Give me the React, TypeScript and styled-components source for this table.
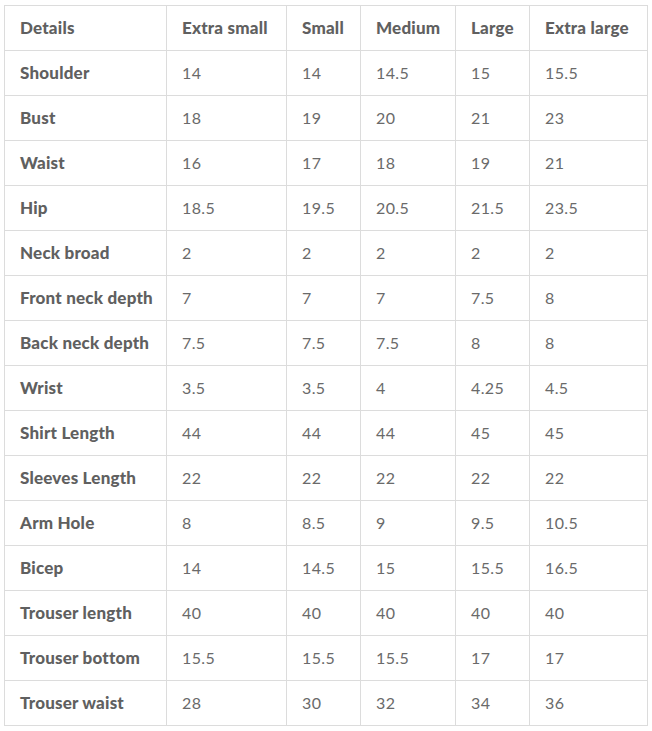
import React from "react";
import styled, { createGlobalStyle } from "styled-components";

const Global = createGlobalStyle`
  html, body { margin: 0; padding: 0; background: #fff; }
  body { font-family: "Lato", "Open Sans", sans-serif; }
`;

const Wrap = styled.div`
  padding: 5px 0 0 4px;
`;

const Table = styled.table`
  border-collapse: collapse;
  table-layout: fixed;
  width: 643px;
  color: #666;
`;

const Cell = styled.td<{ $bold?: boolean }>`
  border: 1px solid #dcdcdc;
  height: 43px;
  padding: 0 0 1px 15px;
  font-size: ${(p) => (p.$bold ? "17px" : "16px")};
  font-weight: ${(p) => (p.$bold ? 900 : 400)};
  color: ${(p) => (p.$bold ? "#606060" : "#6a6a6a")};
  letter-spacing: ${(p) => (p.$bold ? "0.2px" : "0.4px")};
  white-space: nowrap;
  text-align: left;
  vertical-align: middle;
`;

const widths = [162, 120, 74, 95, 74, 118];
const header = ["Details", "Extra small", "Small", "Medium", "Large", "Extra large"];
const rows: string[][] = [
  ["Shoulder", "14", "14", "14.5", "15", "15.5"],
  ["Bust", "18", "19", "20", "21", "23"],
  ["Waist", "16", "17", "18", "19", "21"],
  ["Hip", "18.5", "19.5", "20.5", "21.5", "23.5"],
  ["Neck broad", "2", "2", "2", "2", "2"],
  ["Front neck depth", "7", "7", "7", "7.5", "8"],
  ["Back neck depth", "7.5", "7.5", "7.5", "8", "8"],
  ["Wrist", "3.5", "3.5", "4", "4.25", "4.5"],
  ["Shirt Length", "44", "44", "44", "45", "45"],
  ["Sleeves Length", "22", "22", "22", "22", "22"],
  ["Arm Hole", "8", "8.5", "9", "9.5", "10.5"],
  ["Bicep", "14", "14.5", "15", "15.5", "16.5"],
  ["Trouser length", "40", "40", "40", "40", "40"],
  ["Trouser bottom", "15.5", "15.5", "15.5", "17", "17"],
  ["Trouser waist", "28", "30", "32", "34", "36"],
];

export default function App() {
  return (
    <>
      <Global />
      <Wrap>
        <Table>
          <colgroup>
            {widths.map((w, i) => (
              <col key={i} style={{ width: w }} />
            ))}
          </colgroup>
          <tbody>
            <tr>
              {header.map((h) => (
                <Cell key={h} $bold>
                  {h}
                </Cell>
              ))}
            </tr>
            {rows.map((r) => (
              <tr key={r[0]}>
                {r.map((c, i) => (
                  <Cell key={i} $bold={i === 0}>
                    {c}
                  </Cell>
                ))}
              </tr>
            ))}
          </tbody>
        </Table>
      </Wrap>
    </>
  );
}
